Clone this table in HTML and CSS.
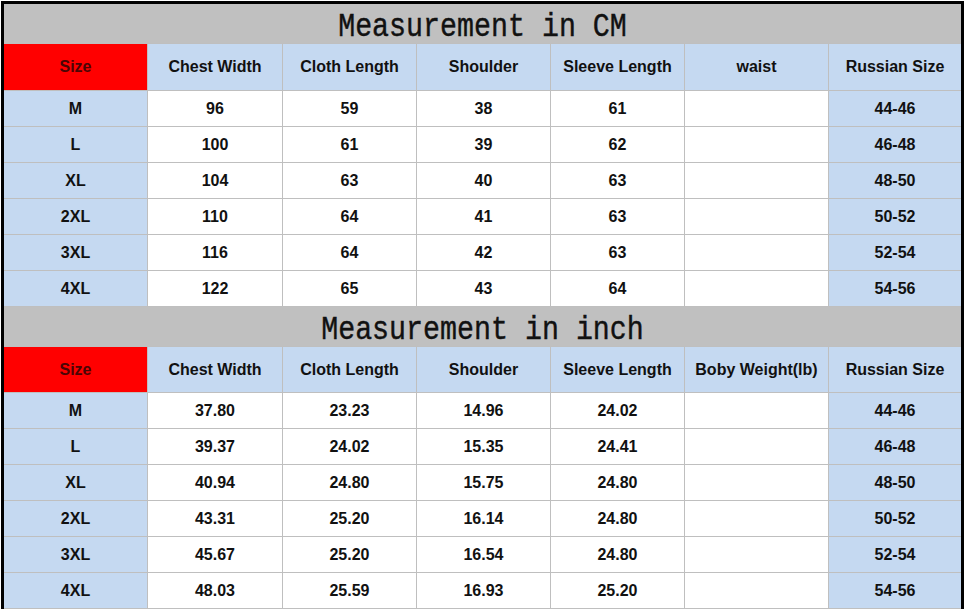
FILE: index.html
```html
<!DOCTYPE html>
<html>
<head>
<meta charset="utf-8">
<link rel="stylesheet" href="styles.css">
</head>
<body>
<div class="frame">
  <div class="grid">
    <div class="title"><span class="ttext">Measurement in CM</span></div>
    <div class="cell red">Size</div>
    <div class="cell blue">Chest Width</div>
    <div class="cell blue">Cloth Length</div>
    <div class="cell blue">Shoulder</div>
    <div class="cell blue">Sleeve Length</div>
    <div class="cell blue">waist</div>
    <div class="cell blue">Russian Size</div>

    <div class="cell blue">M</div><div class="cell">96</div><div class="cell">59</div><div class="cell">38</div><div class="cell">61</div><div class="cell"></div><div class="cell blue">44-46</div>
    <div class="cell blue">L</div><div class="cell">100</div><div class="cell">61</div><div class="cell">39</div><div class="cell">62</div><div class="cell"></div><div class="cell blue">46-48</div>
    <div class="cell blue">XL</div><div class="cell">104</div><div class="cell">63</div><div class="cell">40</div><div class="cell">63</div><div class="cell"></div><div class="cell blue">48-50</div>
    <div class="cell blue">2XL</div><div class="cell">110</div><div class="cell">64</div><div class="cell">41</div><div class="cell">63</div><div class="cell"></div><div class="cell blue">50-52</div>
    <div class="cell blue">3XL</div><div class="cell">116</div><div class="cell">64</div><div class="cell">42</div><div class="cell">63</div><div class="cell"></div><div class="cell blue">52-54</div>
    <div class="cell blue">4XL</div><div class="cell">122</div><div class="cell">65</div><div class="cell">43</div><div class="cell">64</div><div class="cell"></div><div class="cell blue">54-56</div>

    <div class="title"><span class="ttext">Measurement in inch</span></div>
    <div class="cell red">Size</div>
    <div class="cell blue">Chest Width</div>
    <div class="cell blue">Cloth Length</div>
    <div class="cell blue">Shoulder</div>
    <div class="cell blue">Sleeve Length</div>
    <div class="cell blue">Boby Weight(lb)</div>
    <div class="cell blue">Russian Size</div>

    <div class="cell blue">M</div><div class="cell">37.80</div><div class="cell">23.23</div><div class="cell">14.96</div><div class="cell">24.02</div><div class="cell"></div><div class="cell blue">44-46</div>
    <div class="cell blue">L</div><div class="cell">39.37</div><div class="cell">24.02</div><div class="cell">15.35</div><div class="cell">24.41</div><div class="cell"></div><div class="cell blue">46-48</div>
    <div class="cell blue">XL</div><div class="cell">40.94</div><div class="cell">24.80</div><div class="cell">15.75</div><div class="cell">24.80</div><div class="cell"></div><div class="cell blue">48-50</div>
    <div class="cell blue">2XL</div><div class="cell">43.31</div><div class="cell">25.20</div><div class="cell">16.14</div><div class="cell">24.80</div><div class="cell"></div><div class="cell blue">50-52</div>
    <div class="cell blue">3XL</div><div class="cell">45.67</div><div class="cell">25.20</div><div class="cell">16.54</div><div class="cell">24.80</div><div class="cell"></div><div class="cell blue">52-54</div>
    <div class="cell blue">4XL</div><div class="cell">48.03</div><div class="cell">25.59</div><div class="cell">16.93</div><div class="cell">25.20</div><div class="cell"></div><div class="cell blue">54-56</div>
  </div>
</div>
</body>
</html>
```
FILE: styles.css
```css
html, body {
  margin: 0;
  padding: 0;
  background: #ffffff;
}
.frame {
  padding: 1px 1px 0 1px;
  width: 963px;
}
.grid {
  display: grid;
  grid-template-columns: 143px 134px 133px 133px 133px 143px 132px;
  grid-template-rows: 39px 46px repeat(6, 35px) 39px 45px repeat(6, 35px);
  gap: 1px;
  background: #bfbfbf;
  border-top: 3px solid #000;
  border-left: 3px solid #000;
  border-right: 3px solid #000;
  padding-bottom: 1px;
  width: 957px;
}
.title {
  grid-column: 1 / -1;
  background: #c0c0c0;
  display: flex;
  align-items: center;
  justify-content: center;
  font-family: "Liberation Mono", monospace;
  font-size: 28.3px;
  color: #111;
  padding-top: 7px;
  box-sizing: border-box;
}
.ttext {
  display: inline-block;
  transform: scaleY(1.18);
  -webkit-text-stroke: 0.35px #111;
}
.cell {
  background: #ffffff;
  display: flex;
  align-items: center;
  justify-content: center;
  font-family: "Liberation Sans", Arial, sans-serif;
  font-weight: bold;
  font-size: 16px;
  color: #111;
}
.blue {
  background: #c5d9f1;
}
.red {
  background: #ff0000;
  color: #4a0505;
}
```
